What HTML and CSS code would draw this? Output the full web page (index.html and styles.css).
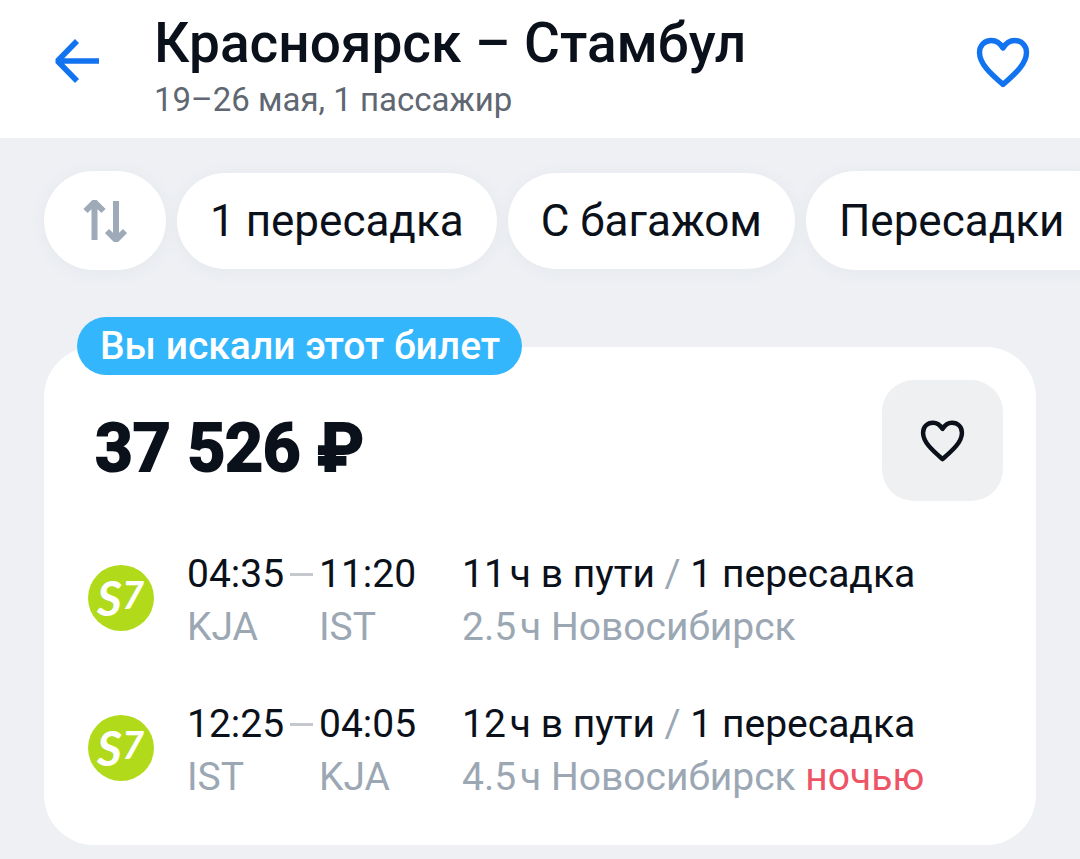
FILE: index.html
```html
<!DOCTYPE html>
<html lang="ru">
<head>
<meta charset="utf-8">
<meta name="viewport" content="width=device-width, initial-scale=1">
<title>Красноярск – Стамбул</title>
<link rel="stylesheet" href="styles.css">
</head>
<body>
<header class="header">
  <button class="icon-button back" type="button" aria-label="Назад">
    <svg width="46" height="46" viewBox="0 0 46 46" fill="none" stroke="currentColor" stroke-width="5.6"><path d="M45 23H5M23 3 3.500 23 23 43" stroke-linejoin="bevel"/></svg>
  </button>
  <div class="heading">
    <h1 class="title">Красноярск – Стамбул</h1>
    <p class="subtitle">19–26 мая, 1 пассажир</p>
  </div>
  <button class="icon-button save" type="button" aria-label="В избранное">
    <svg width="54" height="52" viewBox="0 0 54 52" fill="none" stroke="currentColor" stroke-width="5.4" stroke-linejoin="round"><path d="M27 11C24 6 20 3.5 15.5 3.5 8.5 3.5 3.5 8.5 3.5 15.5 3.5 27 15 37 27 47.5 39 37 50.5 27 50.5 15.5 50.5 8.5 45.5 3.5 38.5 3.5 34 3.5 30 6 27 11Z"/></svg>
  </button>
</header>
<main class="content">
  <nav class="filters" aria-label="Фильтры">
    <button class="chip chip-large chip-sort" type="button" aria-label="Сортировка">
      <svg width="46" height="46" viewBox="0 0 46 46" fill="none" stroke="currentColor" stroke-width="6" stroke-linejoin="bevel"><path d="M12.500 42V4M3.500 13 12.500 4l9 9M34 3v39M25 33l9 9 9-9"/></svg>
    </button>
    <button class="chip" type="button">1 пересадка</button>
    <button class="chip" type="button">С багажом</button>
    <button class="chip chip-large chip-menu" type="button">Пересадки</button>
  </nav>
  <article class="ticket">
    <span class="badge">Вы искали этот билет</span>
    <div class="ticket-top">
      <h2 class="price">37 526 ₽</h2>
      <button class="favorite" type="button" aria-label="Сохранить билет">
        <svg width="45" height="43" viewBox="0 0 54 52" fill="none" stroke="currentColor" stroke-width="5.4" stroke-linejoin="round"><path d="M27 12C24 7 20 4.5 15.5 4.5 8.5 4.5 3.5 9.500 3.5 16.5 3.5 28 15 38 27 48.5 39 38 50.5 28 50.5 16.5 50.5 9.500 45.5 4.5 38.5 4.5 34 4.5 30 7 27 12Z"/></svg>
      </button>
    </div>
    <section class="flight">
      <svg class="airline" viewBox="0 0 66 66" role="img" aria-label="S7"><circle cx="33" cy="33" r="33" fill="#b1db1a"/><text class="airline-name" x="9" y="51"><tspan class="airline-s">S</tspan><tspan class="airline-seven" x="34" y="44">7</tspan></text></svg>
      <div class="point departure"><time>04:35</time><span class="muted">KJA</span></div>
      <div class="point"><time>11:20</time><span class="muted">IST</span></div>
      <div class="details"><span>11&#8202;ч в пути <span class="slash">/</span> 1 пересадка</span><span class="muted">2.5&#8202;ч Новосибирск</span></div>
    </section>
    <section class="flight">
      <svg class="airline" viewBox="0 0 66 66" role="img" aria-label="S7"><circle cx="33" cy="33" r="33" fill="#b1db1a"/><text class="airline-name" x="9" y="51"><tspan class="airline-s">S</tspan><tspan class="airline-seven" x="34" y="44">7</tspan></text></svg>
      <div class="point departure"><time>12:25</time><span class="muted">IST</span></div>
      <div class="point"><time>04:05</time><span class="muted">KJA</span></div>
      <div class="details"><span>12&#8202;ч в пути <span class="slash">/</span> 1 пересадка</span><span class="muted">4.5&#8202;ч Новосибирск <span class="night">ночью</span></span></div>
    </section>
  </article>
</main>
</body>
</html>
```
FILE: styles.css
```css
* { box-sizing: border-box; }
body { margin: 0; min-height: 100vh; background: #eef0f4; color: #0b111a; font-family: Roboto, "Noto Sans", sans-serif; overflow-x: hidden; }
button { border: 0; padding: 0; font: inherit; color: inherit; cursor: pointer; }
svg { display: block; }
h1, h2, p { margin: 0; }
.header { display: flex; align-items: flex-start; padding: 11px 50px 13px 54px; background: #fff; }
.icon-button { background: none; color: #1273f0; }
.back { margin-top: 27px; }
.heading { flex: 1; margin-left: 54px; }
.title { font-size: 55px; line-height: 64px; font-weight: 500; }
.subtitle { font-size: 33px; line-height: 50px; color: #5f6772; }
.save { margin-top: 26px; }
.content { padding: 33px 44px 14px; }
.filters { display: flex; align-items: center; gap: 11px; margin: -33px -44px 0; padding: 33px 0 33px 44px; overflow: hidden; }
.chip { flex: none; height: 96px; padding: 0 33px; border-radius: 50px; background: #fff; font-size: 44px; line-height: 52px; box-shadow: 0 2px 16px #e4e7ec; }
.chip-large { height: 99px; }
.chip-sort { width: 122px; padding: 0 38px; color: #9eaab8; }
.chip-menu { padding-right: 66px; }
.ticket { position: relative; margin-top: 44px; padding: 33px 33px 41px 44px; border-radius: 50px; background: #fff; }
.badge { position: absolute; top: -30px; left: 33px; padding: 0 22px 0 23px; border-radius: 29px; background: #34b6fd; color: #fff; font-size: 39px; line-height: 58px; font-weight: 500; }
.ticket-top { display: flex; justify-content: space-between; padding-left: 7px; margin-bottom: 47px; }
.price { padding-top: 29px; font-size: 66px; line-height: 80px; font-weight: 700; -webkit-text-stroke: 2px currentColor; }
.favorite { display: grid; place-items: center; width: 121px; height: 121px; border-radius: 32px; background: #eef0f2; }
.flight { display: grid; grid-template-columns: 99px 132px 143px 1fr; font-size: 39px; line-height: 53px; }
.flight + .flight { margin-top: 44px; }
.airline { width: 66px; height: 66px; margin-top: 17px; }
.airline-name { fill: #fff; font-family: Lato, "Open Sans", sans-serif; font-style: italic; font-weight: 700; }
.airline-s { font-size: 48px; }
.airline-seven { font-size: 38px; }
.point, .details { display: flex; flex-direction: column; }
.departure time { display: flex; align-items: center; gap: 6px; }
.departure time::after { content: ""; width: 23px; height: 3px; background: #c5c8cc; }
.muted { color: #9ca7b4; }
.night { color: #ed5567; }
.slash { color: #9ca7b4; }
```
